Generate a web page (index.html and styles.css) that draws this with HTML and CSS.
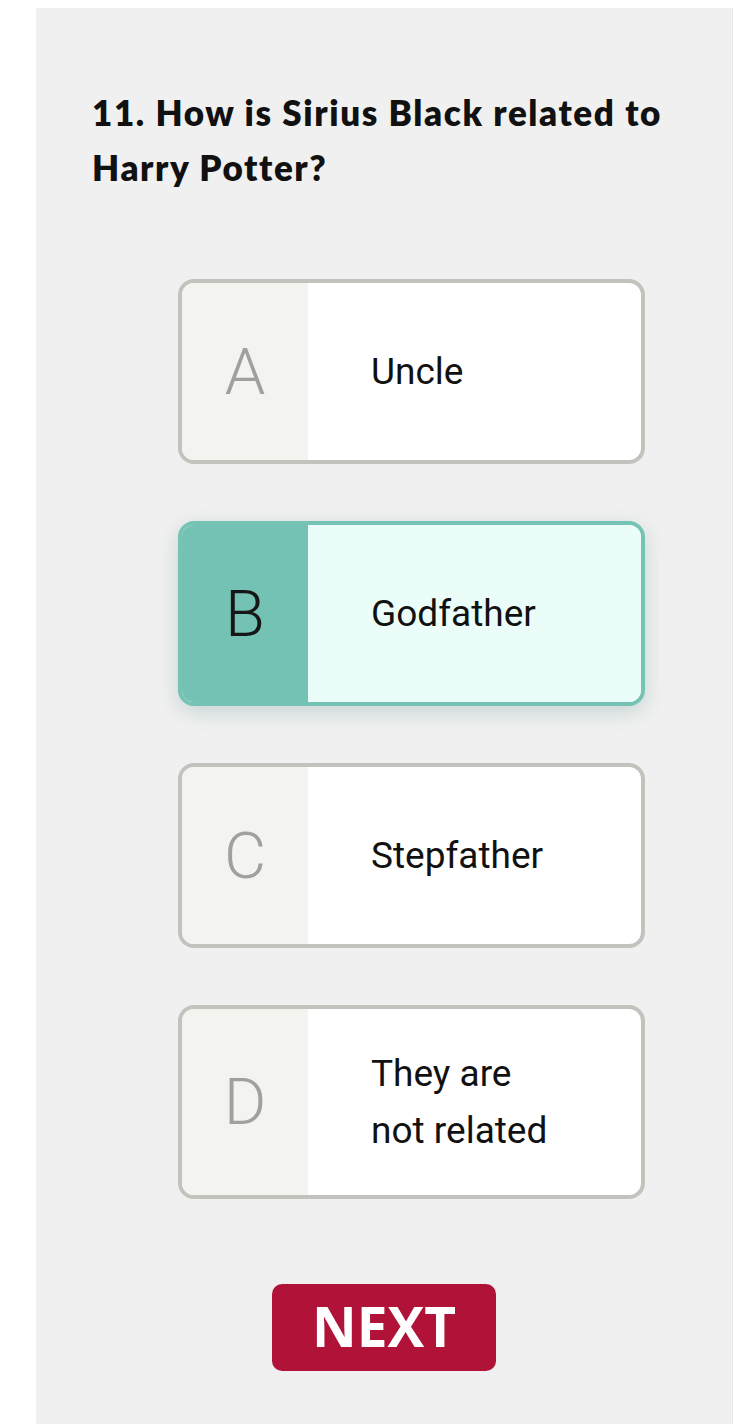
FILE: index.html
```html
<!DOCTYPE html>
<html>
<head>
<meta charset="utf-8">
<link rel="stylesheet" href="styles.css">
</head>
<body>
<main class="panel">
  <h1 class="question">11. How is Sirius Black related to Harry Potter?</h1>
  <ul class="options">
    <li class="option"><span class="letter">A</span><span class="answer">Uncle</span></li>
    <li class="option selected"><span class="letter">B</span><span class="answer">Godfather</span></li>
    <li class="option"><span class="letter">C</span><span class="answer">Stepfather</span></li>
    <li class="option"><span class="letter">D</span><span class="answer">They are<br>not related</span></li>
  </ul>
  <div class="actions"><button class="next">NEXT</button></div>
</main>
</body>
</html>
```
FILE: styles.css
```css
html, body {
  margin: 0;
  padding: 0;
  background: #ffffff;
}
.panel {
  margin: 8px 22px 0 36px;
  min-height: 1416px;
  background: #f0f0f0;
  box-sizing: border-box;
  padding: 77px 56px 0 56px;
  border-right: 1px solid #e8e8e8;
}
.question {
  margin: 0;
  font-family: "Lato", "DejaVu Sans", sans-serif;
  font-weight: 800;
  font-size: 35px;
  line-height: 55px;
  letter-spacing: 1.6px;
  color: #111;
  max-width: 600px;
}
.options {
  list-style: none;
  margin: 84px 0 0 86px;
  padding: 0;
  display: flex;
  flex-direction: column;
  gap: 57px;
}
.option {
  width: 467px;
  min-height: 185px;
  box-sizing: border-box;
  border: 4px solid #c1c3bd;
  border-radius: 16px;
  overflow: hidden;
  display: flex;
  background: #ffffff;
}
.letter {
  flex: 0 0 126px;
  background: #f3f4f0;
  display: flex;
  align-items: center;
  justify-content: center;
  font-family: "Roboto", sans-serif;
  font-weight: 300;
  font-size: 65px;
  color: #9fa19d;
}
.answer {
  flex: 1;
  display: flex;
  align-items: center;
  padding: 36px 20px 36px 63px;
  font-family: "Roboto", sans-serif;
  font-weight: 400;
  font-size: 37px;
  line-height: 57px;
  color: #111;
}
.option.selected {
  border-color: #74c3b4;
  box-shadow: 0 6px 20px rgba(40, 110, 100, 0.2);
}
.option.selected .letter {
  background: #73c2b3;
  color: #161616;
}
.option.selected .answer {
  background: #ebfdf9;
}
.actions {
  display: flex;
  justify-content: center;
  margin-top: 85px;
}
.next {
  width: 224px;
  height: 87px;
  border: none;
  border-radius: 10px;
  background: #b01238;
  color: #ffffff;
  font-family: "Open Sans", sans-serif;
  font-weight: 700;
  font-size: 55px;
  line-height: 1;
  padding: 0 0 4px;
}
```
